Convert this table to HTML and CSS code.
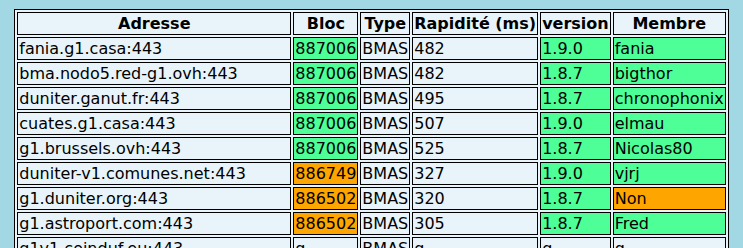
FILE: index.html
```html
<!DOCTYPE html>
<html>
<head>
<meta charset="utf-8">
<link rel="stylesheet" href="styles.css">
</head>
<body>
<table class="peers">
  <tr>
    <th class="addr">Adresse</th>
    <th>Bloc</th>
    <th>Type</th>
    <th>Rapidité (ms)</th>
    <th>version</th>
    <th>Membre</th>
  </tr>
  <tr><td>fania.g1.casa:443</td><td class="ok">887006</td><td>BMAS</td><td>482</td><td class="ok">1.9.0</td><td class="ok">fania</td></tr>
  <tr><td>bma.nodo5.red-g1.ovh:443</td><td class="ok">887006</td><td>BMAS</td><td>482</td><td class="ok">1.8.7</td><td class="ok">bigthor</td></tr>
  <tr><td>duniter.ganut.fr:443</td><td class="ok">887006</td><td>BMAS</td><td>495</td><td class="ok">1.8.7</td><td class="ok">chronophonix</td></tr>
  <tr><td>cuates.g1.casa:443</td><td class="ok">887006</td><td>BMAS</td><td>507</td><td class="ok">1.9.0</td><td class="ok">elmau</td></tr>
  <tr><td>g1.brussels.ovh:443</td><td class="ok">887006</td><td>BMAS</td><td>525</td><td class="ok">1.8.7</td><td class="ok">Nicolas80</td></tr>
  <tr><td>duniter-v1.comunes.net:443</td><td class="warn">886749</td><td>BMAS</td><td>327</td><td class="ok">1.9.0</td><td class="ok">vjrj</td></tr>
  <tr><td>g1.duniter.org:443</td><td class="warn">886502</td><td>BMAS</td><td>320</td><td class="ok">1.8.7</td><td class="warn">Non</td></tr>
  <tr><td>g1.astroport.com:443</td><td class="warn">886502</td><td>BMAS</td><td>305</td><td class="ok">1.8.7</td><td class="ok">Fred</td></tr>
  <tr><td>g1v1.coinduf.eu:443</td><td>g</td><td>BMAS</td><td>g</td><td>g</td><td>g</td></tr>
</table>
</body>
</html>
```
FILE: styles.css
```css
html, body {
  margin: 0;
  padding: 0;
  background: #a2d8e3;
  overflow: hidden;
}
body {
  font-family: "DejaVu Sans", sans-serif;
  font-size: 16px;
  color: #000;
}
.peers {
  margin: 9px auto 0;
  border: 1px solid #000;
  border-spacing: 2px;
  background: #e8f4f9;
}
.peers th,
.peers td {
  border: 1px solid #000;
  padding: 1px;
  line-height: 19px;
  white-space: nowrap;
  background: #e8f4f9;
}
.peers th {
  font-weight: bold;
  text-align: center;
}
.peers td {
  text-align: left;
}
.peers .addr {
  width: 270px;
}
.peers td.ok {
  background: #4dff96;
}
.peers td.warn {
  background: #ffa500;
}
```
